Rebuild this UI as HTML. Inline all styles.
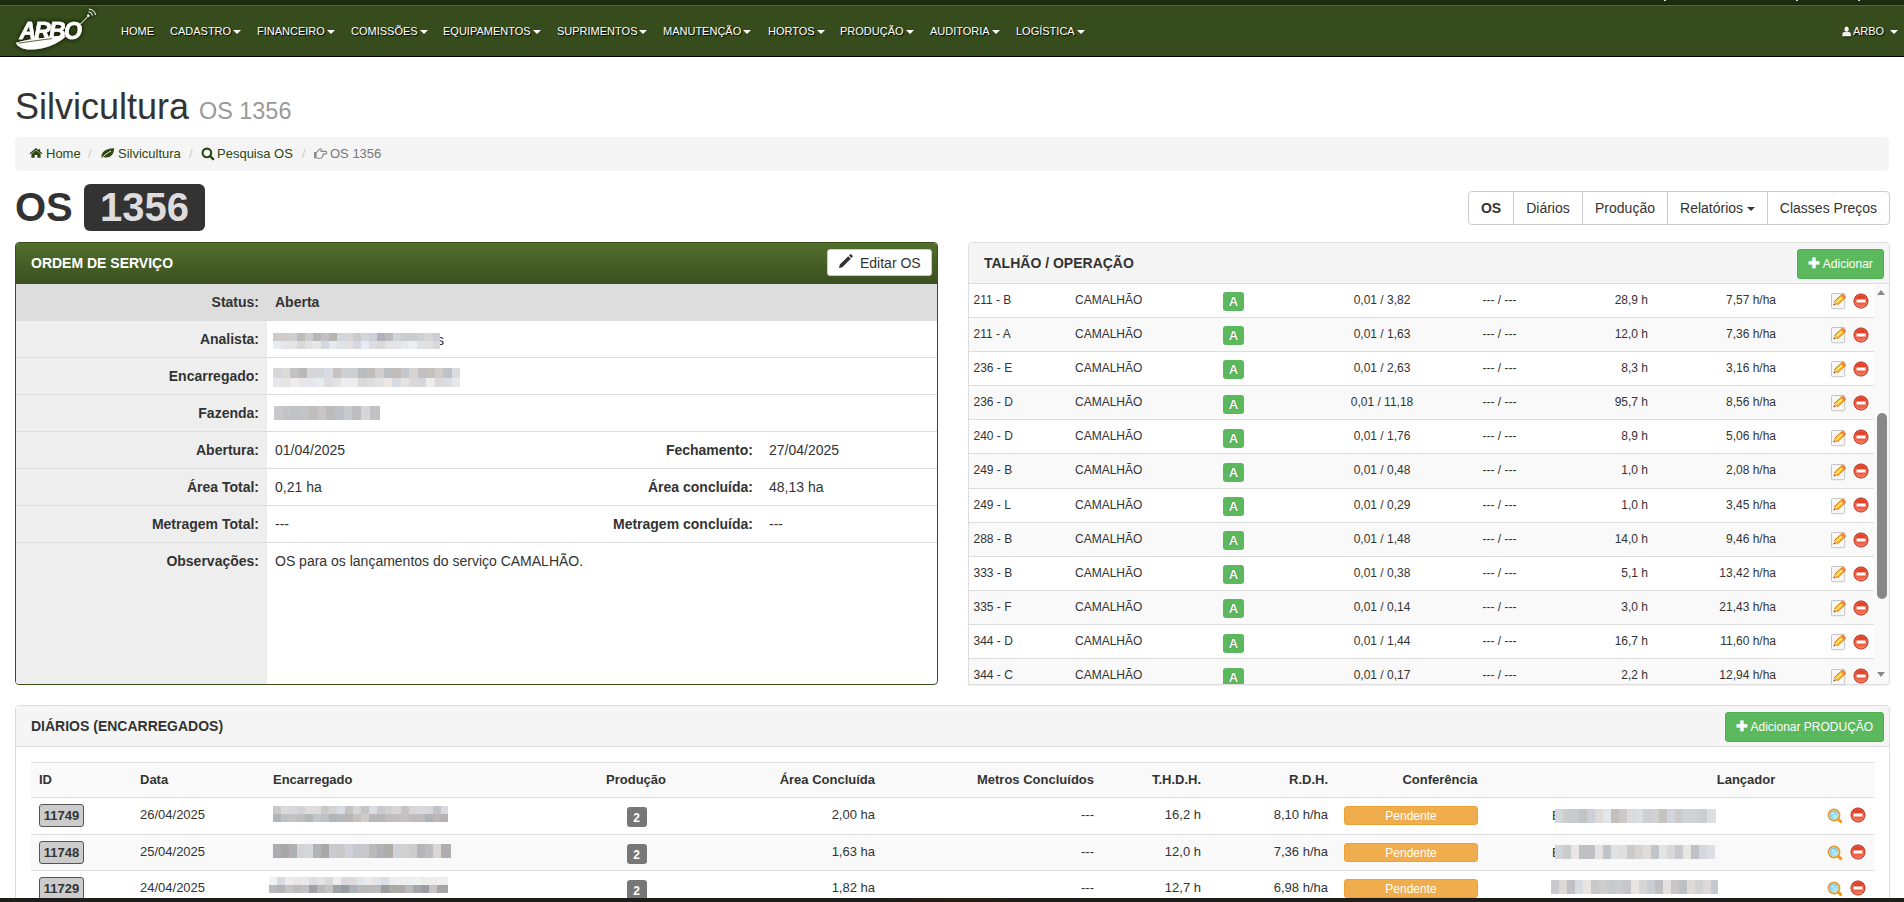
<!DOCTYPE html><html><head><meta charset="utf-8"><style>
*{box-sizing:border-box;margin:0;padding:0}
html,body{width:1904px;height:902px;overflow:hidden;background:#fff}
body{font-family:"Liberation Sans",sans-serif;color:#333;font-size:14px;position:relative}
.a{position:absolute;white-space:nowrap}
.r{text-align:right}
.pix{position:absolute;overflow:hidden}
.pix i{position:absolute;display:block}
#nav{position:absolute;left:0;top:0;width:1904px;height:57px;background:#364c1c}
#nav .s1{position:absolute;left:0;top:0;width:1904px;height:4px;background:#1c2a0e}
#nav .s2{position:absolute;left:0;top:4px;width:1904px;height:1px;background:#18250a}
#nav .s3{position:absolute;left:0;top:5px;width:1904px;height:1px;background:#4e6c2a}
#nav .s4{position:absolute;left:0;top:56px;width:1904px;height:1px;background:#000}
.nl{position:absolute;top:25px;font-size:11px;line-height:12px;color:#fff;text-shadow:1px 1px 1px #000;white-space:nowrap}
.caret{display:inline-block;width:0;height:0;border-top:4px solid;border-left:4px solid transparent;border-right:4px solid transparent;vertical-align:middle;margin-left:2px;margin-top:-1px}
.bc{position:absolute;left:15px;top:137px;width:1874px;height:34px;background:#f5f5f5;border-radius:4px}
.bct{position:absolute;top:146px;font-size:13px;line-height:15px;color:#2e4712;white-space:nowrap}
.bcs{position:absolute;top:146px;font-size:13px;line-height:15px;color:#ccc}
.btng{position:absolute;left:1468px;top:191px;height:34px;border:1px solid #ccc;border-radius:4px;background:#fff}
.btng div{position:absolute;top:0;height:32px;line-height:32px;font-size:14px;color:#333;text-align:center;border-left:1px solid #ccc}
.panel{position:absolute;border:1px solid #ddd;border-radius:4px;background:#fff;overflow:hidden}
.ph{position:absolute;left:0;top:0;right:0;background:#f5f5f5;border-bottom:1px solid #ddd}
.pt{position:absolute;font-size:14px;font-weight:bold;color:#333;white-space:nowrap;line-height:16px}
.btn-s{position:absolute;background:#5cb85c;border:1px solid #4cae4c;border-radius:3px;color:#fff;font-size:12px;line-height:27px;text-align:center;white-space:nowrap}
.lbl{position:absolute;font-weight:bold;font-size:14px;line-height:16px;text-align:right;white-space:nowrap}
.val{position:absolute;font-size:14px;line-height:16px;white-space:nowrap}
.hl{position:absolute;height:1px;background:#ddd}
.t12{position:absolute;font-size:12px;line-height:14px;white-space:nowrap}
.badgeA{position:absolute;width:21px;height:19px;background:#5cb85c;border-radius:3px;color:#fff;font-size:13px;font-weight:bold;line-height:19px;text-align:center;text-shadow:0 0 1px rgba(0,0,0,.6)}
.th{position:absolute;font-size:13px;font-weight:bold;line-height:15px;white-space:nowrap}
.t13{position:absolute;font-size:13px;line-height:15px;white-space:nowrap}
.idb{position:absolute;width:45px;height:23px;background:#ccc;border:1px solid #555;border-radius:3px;font-weight:bold;font-size:13px;line-height:21px;text-align:center;color:#333}
.pb{position:absolute;width:20px;height:20px;background:#777;border-radius:3px;color:#fff;font-weight:bold;font-size:12px;line-height:22px;text-align:center;text-indent:-1px}
.pend{position:absolute;width:134px;height:19px;background:#f0ad4e;border:1px solid #eea236;border-radius:3px;color:#fff;font-size:12px;line-height:19px;text-align:center}
</style></head><body><div id="nav"><div class="s1"></div><div class="s2"></div><div class="s3"></div><div class="s4"></div><svg class="a" style="left:0;top:0" width="110" height="56" viewBox="0 0 110 56">
<defs><filter id="sh" x="-30%" y="-30%" width="160%" height="160%"><feGaussianBlur in="SourceAlpha" stdDeviation="2" result="b"/><feFlood flood-color="#121e06"/><feComposite operator="in" in2="b"/><feComponentTransfer><feFuncA type="linear" slope="1.5"/></feComponentTransfer><feMerge><feMergeNode/><feMergeNode in="SourceGraphic"/></feMerge></filter></defs>
<g filter="url(#sh)">
<text x="19.5" y="38.6" font-family="Liberation Sans" font-weight="bold" font-style="italic" font-size="23" fill="#fff" stroke="#fff" stroke-width="0.5" letter-spacing="-1.8">ARBO</text>
<path d="M16 42.7 C 30 38.5, 50 37, 66 36 C 58 44, 45 49.5, 31 49.6 C 22 49.6, 17.5 46.5, 16 42.7 Z" fill="#fff"/>
<path d="M18.5 43.2 C 30 41.5, 42 39.8, 52 38.6" stroke="#2a3d14" stroke-width="0.8" fill="none"/>
<path d="M80.5 24 L 87.5 16.8" stroke="#fff" stroke-width="0.9"/>
<circle cx="88.2" cy="15.8" r="1.2" fill="#fff"/>
<path d="M88.6 11.8 A 4 4 0 0 1 92.4 15.4" stroke="#fff" stroke-width="0.9" fill="none"/>
<path d="M88.9 9.2 A 6.6 6.6 0 0 1 95.6 15" stroke="#fff" stroke-width="0.9" fill="none"/>
</g></svg><div class="nl" style="left:121px">HOME</div><div class="nl" style="left:170px">CADASTRO<span class="caret"></span></div><div class="nl" style="left:257px">FINANCEIRO<span class="caret"></span></div><div class="nl" style="left:351px">COMISSÕES<span class="caret"></span></div><div class="nl" style="left:443px">EQUIPAMENTOS<span class="caret"></span></div><div class="nl" style="left:557px">SUPRIMENTOS<span class="caret"></span></div><div class="nl" style="left:663px">MANUTENÇÃO<span class="caret"></span></div><div class="nl" style="left:768px">HORTOS<span class="caret"></span></div><div class="nl" style="left:840px">PRODUÇÃO<span class="caret"></span></div><div class="nl" style="left:930px">AUDITORIA<span class="caret"></span></div><div class="nl" style="left:1016px">LOGÍSTICA<span class="caret"></span></div><svg class="a" style="left:1842px;top:26px" width="10" height="12" viewBox="0 0 10 12"><ellipse cx="4.6" cy="3.2" rx="2.1" ry="2.6" fill="#fff"/><path d="M0.4 10.3 L0.4 8 Q0.4 6 2.4 6 L6.8 6 Q8.8 6 8.8 8 L8.8 10.3 Z" fill="#eee"/><path d="M1.2 11.2 L9.6 11.2" stroke="#000" stroke-width="0.8" opacity="0.5"/></svg><div class="nl" style="left:1853px">ARBO<span class="caret" style="margin-left:6px"></span></div></div><div class="a" style="left:15px;top:86px;font-size:36px;line-height:42px;color:#333">Silvicultura <span style="font-size:23.4px;color:#999">OS 1356</span></div><div class="bc"></div><svg class="a" style="left:29px;top:147px" width="14" height="12" viewBox="0 0 14 12"><path d="M0.9 6.7 L7 1.9 L13.1 6.7" stroke="#2e4712" stroke-width="1.3" fill="none"/><path d="M2.4 6.9 L7 3.3 L11.6 6.9 L11.6 10.8 L8.3 10.8 L8.3 7.9 L5.7 7.9 L5.7 10.8 L2.4 10.8 Z" fill="#2e4712"/><rect x="9.7" y="2" width="1.4" height="3.4" fill="#2e4712"/></svg><div class="bct" style="left:46px">Home</div><div class="bcs" style="left:88px">/</div><svg class="a" style="left:100px;top:147px" width="15" height="12" viewBox="0 0 15 12"><path d="M1.6 11 C 0.6 6.5, 4 1.6, 14.2 1.2 C 14 7.5, 10.5 11, 5 10.4 C 3.6 10.3, 2.6 10.2, 1.6 11 Z" fill="#2e4712"/><path d="M1.4 11.4 C 4 8.4, 7.5 5.8, 11 4" stroke="#f5f5f5" stroke-width="1" fill="none"/></svg><div class="bct" style="left:118px">Silvicultura</div><div class="bcs" style="left:189px">/</div><svg class="a" style="left:200px;top:146px" width="15" height="15" viewBox="0 0 15 15"><circle cx="6.9" cy="6.9" r="4.3" stroke="#2e4712" stroke-width="2.1" fill="none"/><path d="M9.9 9.9 L13.2 13.1" stroke="#2e4712" stroke-width="2.4" stroke-linecap="round"/></svg><div class="bct" style="left:217px">Pesquisa OS</div><div class="bcs" style="left:302px">/</div><svg class="a" style="left:313px;top:147px" width="15" height="13" viewBox="0 0 15 13"><rect x="1" y="5" width="2.6" height="6.2" fill="#888"/><path d="M3.6 5.4 L6.6 2.2 Q7.6 1.2 8.4 2.2 L7.9 4.4 L12.6 4.4 Q13.9 4.6 13.8 5.8 Q13.6 6.9 12.5 6.9 L10.2 6.9 L10.2 7.9 Q10.2 8.9 9.3 9.1 L9.3 9.9 Q9.1 11.2 7.7 11.2 L3.6 11.2" stroke="#888" stroke-width="1.1" fill="none" stroke-linejoin="round"/></svg><div class="bct" style="left:330px;color:#777">OS 1356</div><div class="a" style="left:15px;top:184px;font-size:40px;line-height:46px;font-weight:bold;color:#333">OS</div><div class="a" style="left:84px;top:184px;width:121px;height:47px;background:#333;border-radius:6px;color:#ddd;font-size:40px;font-weight:bold;line-height:47px;text-align:center">1356</div><div class="btng" style="width:422px"><div style="left:0px;width:44px;font-weight:bold;border-left:0;">OS</div><div style="left:44px;width:69px;">Diários</div><div style="left:113px;width:85px;">Produção</div><div style="left:198px;width:100px;">Relatórios <span class="caret" style="margin-left:0"></span></div><div style="left:298px;width:122px;">Classes Preços</div></div><div class="panel" style="left:15px;top:242px;width:923px;height:443px;border-color:#3a4f1e"><div class="ph" style="height:41px;background:linear-gradient(#516e2c,#3a5020);border-bottom:0"></div><div class="pt" style="left:15px;top:12px;color:#fff">ORDEM DE SERVIÇO</div><div class="a" style="left:811px;top:6px;width:105px;height:27px;background:#fff;border-radius:3px;border:1px solid #ccc"></div><svg class="a" style="left:822px;top:11px" width="15" height="15" viewBox="0 0 15 15"><path d="M1 14 L1.8 10.6 L10.2 2.2 L12.8 4.8 L4.4 13.2 Z M11 1.4 L12.2 0.3 Q12.8 -0.1 13.3 0.4 L14.6 1.7 Q15 2.2 14.6 2.7 L13.5 3.9 Z" fill="#333"/></svg><div class="a" style="left:844px;top:12px;font-size:14px;line-height:16px;color:#333">Editar OS</div><div class="a" style="left:0;top:41px;width:921px;height:37px;background:#ddd"></div><div class="a" style="left:0;top:78px;width:251px;height:364px;background:#eee"></div><div class="hl" style="left:0;top:114px;width:921px"></div><div class="hl" style="left:0;top:151px;width:921px"></div><div class="hl" style="left:0;top:188px;width:921px"></div><div class="hl" style="left:0;top:225px;width:921px"></div><div class="hl" style="left:0;top:262px;width:921px"></div><div class="hl" style="left:0;top:299px;width:921px"></div><div class="lbl" style="left:0;width:243px;top:51px">Status:</div><div class="val" style="left:259px;top:51px;font-weight:bold">Aberta</div><div class="lbl" style="left:0;width:243px;top:88px">Analista:</div><div class="lbl" style="left:0;width:243px;top:125px">Encarregado:</div><div class="lbl" style="left:0;width:243px;top:162px">Fazenda:</div><div class="lbl" style="left:0;width:243px;top:199px">Abertura:</div><div class="val" style="left:259px;top:199px;">01/04/2025</div><div class="lbl" style="left:0;width:243px;top:236px">Área Total:</div><div class="val" style="left:259px;top:236px;">0,21 ha</div><div class="lbl" style="left:0;width:243px;top:273px">Metragem Total:</div><div class="val" style="left:259px;top:273px;">---</div><div class="lbl" style="left:0;width:243px;top:310px">Observações:</div><div class="val" style="left:259px;top:310px;">OS para os lançamentos do serviço CAMALHÃO.</div><div class="lbl" style="left:500px;width:237px;top:199px">Fechamento:</div><div class="val" style="left:753px;top:199px">27/04/2025</div><div class="lbl" style="left:500px;width:237px;top:236px">Área concluída:</div><div class="val" style="left:753px;top:236px">48,13 ha</div><div class="lbl" style="left:500px;width:237px;top:273px">Metragem concluída:</div><div class="val" style="left:753px;top:273px">---</div><div class="pix" style="left:257px;top:90px;width:167px;height:16px"><i style="left:0px;top:0px;width:8.6px;height:8px;background:rgb(207,203,201)"></i><i style="left:8px;top:0px;width:8.6px;height:8px;background:rgb(207,204,203)"></i><i style="left:16px;top:0px;width:8.6px;height:8px;background:rgb(206,207,210)"></i><i style="left:24px;top:0px;width:8.6px;height:8px;background:rgb(190,186,184)"></i><i style="left:32px;top:0px;width:8.6px;height:8px;background:rgb(203,205,209)"></i><i style="left:40px;top:0px;width:8.6px;height:8px;background:rgb(184,181,180)"></i><i style="left:48px;top:0px;width:8.6px;height:8px;background:rgb(192,194,198)"></i><i style="left:56px;top:0px;width:8.6px;height:8px;background:rgb(184,180,178)"></i><i style="left:64px;top:0px;width:8.6px;height:8px;background:rgb(211,215,221)"></i><i style="left:72px;top:0px;width:8.6px;height:8px;background:rgb(215,213,213)"></i><i style="left:80px;top:0px;width:8.6px;height:8px;background:rgb(201,203,207)"></i><i style="left:88px;top:0px;width:8.6px;height:8px;background:rgb(210,214,220)"></i><i style="left:96px;top:0px;width:8.6px;height:8px;background:rgb(205,208,213)"></i><i style="left:104px;top:0px;width:8.6px;height:8px;background:rgb(174,178,184)"></i><i style="left:112px;top:0px;width:8.6px;height:8px;background:rgb(186,187,190)"></i><i style="left:120px;top:0px;width:8.6px;height:8px;background:rgb(209,213,219)"></i><i style="left:128px;top:0px;width:8.6px;height:8px;background:rgb(205,204,205)"></i><i style="left:136px;top:0px;width:8.6px;height:8px;background:rgb(202,203,206)"></i><i style="left:144px;top:0px;width:8.6px;height:8px;background:rgb(207,208,211)"></i><i style="left:152px;top:0px;width:8.6px;height:8px;background:rgb(215,215,217)"></i><i style="left:160px;top:0px;width:7px;height:8px;background:rgb(202,206,212)"></i><i style="left:0px;top:8px;width:8.6px;height:8px;background:rgb(233,236,241)"></i><i style="left:8px;top:8px;width:8.6px;height:8px;background:rgb(229,229,231)"></i><i style="left:16px;top:8px;width:8.6px;height:8px;background:rgb(232,228,226)"></i><i style="left:24px;top:8px;width:8.6px;height:8px;background:rgb(217,217,219)"></i><i style="left:32px;top:8px;width:8.6px;height:8px;background:rgb(224,225,228)"></i><i style="left:40px;top:8px;width:8.6px;height:8px;background:rgb(231,231,233)"></i><i style="left:48px;top:8px;width:8.6px;height:8px;background:rgb(212,215,220)"></i><i style="left:56px;top:8px;width:8.6px;height:8px;background:rgb(230,233,238)"></i><i style="left:64px;top:8px;width:8.6px;height:8px;background:rgb(224,227,232)"></i><i style="left:72px;top:8px;width:8.6px;height:8px;background:rgb(226,224,224)"></i><i style="left:80px;top:8px;width:8.6px;height:8px;background:rgb(213,217,223)"></i><i style="left:88px;top:8px;width:8.6px;height:8px;background:rgb(232,236,242)"></i><i style="left:96px;top:8px;width:8.6px;height:8px;background:rgb(220,221,224)"></i><i style="left:104px;top:8px;width:8.6px;height:8px;background:rgb(219,216,215)"></i><i style="left:112px;top:8px;width:8.6px;height:8px;background:rgb(229,227,227)"></i><i style="left:120px;top:8px;width:8.6px;height:8px;background:rgb(225,228,233)"></i><i style="left:128px;top:8px;width:8.6px;height:8px;background:rgb(232,233,236)"></i><i style="left:136px;top:8px;width:8.6px;height:8px;background:rgb(239,239,241)"></i><i style="left:144px;top:8px;width:8.6px;height:8px;background:rgb(222,225,230)"></i><i style="left:152px;top:8px;width:8.6px;height:8px;background:rgb(225,224,225)"></i><i style="left:160px;top:8px;width:7px;height:8px;background:rgb(217,215,215)"></i></div><div class="pix" style="left:257px;top:125px;width:187px;height:19px"><i style="left:0.0px;top:0px;width:9.1px;height:10px;background:rgb(215,215,217)"></i><i style="left:8.5px;top:0px;width:9.1px;height:10px;background:rgb(219,218,219)"></i><i style="left:17.0px;top:0px;width:9.1px;height:10px;background:rgb(196,194,194)"></i><i style="left:25.5px;top:0px;width:9.1px;height:10px;background:rgb(186,185,186)"></i><i style="left:34.0px;top:0px;width:9.1px;height:10px;background:rgb(215,215,217)"></i><i style="left:42.5px;top:0px;width:9.1px;height:10px;background:rgb(213,214,217)"></i><i style="left:51.0px;top:0px;width:9.1px;height:10px;background:rgb(216,220,226)"></i><i style="left:59.5px;top:0px;width:9.1px;height:10px;background:rgb(197,194,193)"></i><i style="left:68.0px;top:0px;width:9.1px;height:10px;background:rgb(206,208,212)"></i><i style="left:76.5px;top:0px;width:9.1px;height:10px;background:rgb(205,206,209)"></i><i style="left:85.0px;top:0px;width:9.1px;height:10px;background:rgb(187,188,191)"></i><i style="left:93.5px;top:0px;width:9.1px;height:10px;background:rgb(193,189,187)"></i><i style="left:102.0px;top:0px;width:9.1px;height:10px;background:rgb(208,206,206)"></i><i style="left:110.5px;top:0px;width:9.1px;height:10px;background:rgb(186,190,196)"></i><i style="left:119.0px;top:0px;width:9.1px;height:10px;background:rgb(192,188,186)"></i><i style="left:127.5px;top:0px;width:9.1px;height:10px;background:rgb(196,199,204)"></i><i style="left:136.0px;top:0px;width:9.1px;height:10px;background:rgb(215,212,211)"></i><i style="left:144.5px;top:0px;width:9.1px;height:10px;background:rgb(194,192,192)"></i><i style="left:153.0px;top:0px;width:9.1px;height:10px;background:rgb(197,193,191)"></i><i style="left:161.5px;top:0px;width:9.1px;height:10px;background:rgb(209,205,203)"></i><i style="left:170.0px;top:0px;width:9.1px;height:10px;background:rgb(191,195,201)"></i><i style="left:178.5px;top:0px;width:8.5px;height:10px;background:rgb(218,220,224)"></i><i style="left:0.0px;top:10px;width:9.1px;height:9px;background:rgb(228,231,236)"></i><i style="left:8.5px;top:10px;width:9.1px;height:9px;background:rgb(229,227,227)"></i><i style="left:17.0px;top:10px;width:9.1px;height:9px;background:rgb(239,236,235)"></i><i style="left:25.5px;top:10px;width:9.1px;height:9px;background:rgb(232,230,230)"></i><i style="left:34.0px;top:10px;width:9.1px;height:9px;background:rgb(228,232,238)"></i><i style="left:42.5px;top:10px;width:9.1px;height:9px;background:rgb(232,235,240)"></i><i style="left:51.0px;top:10px;width:9.1px;height:9px;background:rgb(221,221,223)"></i><i style="left:59.5px;top:10px;width:9.1px;height:9px;background:rgb(227,226,227)"></i><i style="left:68.0px;top:10px;width:9.1px;height:9px;background:rgb(239,237,237)"></i><i style="left:76.5px;top:10px;width:9.1px;height:9px;background:rgb(236,236,238)"></i><i style="left:85.0px;top:10px;width:9.1px;height:9px;background:rgb(218,218,220)"></i><i style="left:93.5px;top:10px;width:9.1px;height:9px;background:rgb(223,222,223)"></i><i style="left:102.0px;top:10px;width:9.1px;height:9px;background:rgb(227,226,227)"></i><i style="left:110.5px;top:10px;width:9.1px;height:9px;background:rgb(235,231,229)"></i><i style="left:119.0px;top:10px;width:9.1px;height:9px;background:rgb(216,220,226)"></i><i style="left:127.5px;top:10px;width:9.1px;height:9px;background:rgb(229,227,227)"></i><i style="left:136.0px;top:10px;width:9.1px;height:9px;background:rgb(220,216,214)"></i><i style="left:144.5px;top:10px;width:9.1px;height:9px;background:rgb(214,215,218)"></i><i style="left:153.0px;top:10px;width:9.1px;height:9px;background:rgb(238,236,236)"></i><i style="left:161.5px;top:10px;width:9.1px;height:9px;background:rgb(218,216,216)"></i><i style="left:170.0px;top:10px;width:9.1px;height:9px;background:rgb(218,221,226)"></i><i style="left:178.5px;top:10px;width:8.5px;height:9px;background:rgb(231,232,235)"></i></div><div class="pix" style="left:258px;top:163px;width:106px;height:14px"><i style="left:0.0px;top:0px;width:9.299999999999999px;height:14px;background:rgb(201,201,203)"></i><i style="left:8.7px;top:0px;width:9.299999999999999px;height:14px;background:rgb(195,196,199)"></i><i style="left:17.4px;top:0px;width:9.299999999999999px;height:14px;background:rgb(193,194,197)"></i><i style="left:26.1px;top:0px;width:9.299999999999999px;height:14px;background:rgb(194,196,200)"></i><i style="left:34.8px;top:0px;width:9.299999999999999px;height:14px;background:rgb(193,189,187)"></i><i style="left:43.5px;top:0px;width:9.299999999999999px;height:14px;background:rgb(198,198,200)"></i><i style="left:52.2px;top:0px;width:9.299999999999999px;height:14px;background:rgb(188,186,186)"></i><i style="left:60.9px;top:0px;width:9.299999999999999px;height:14px;background:rgb(189,193,199)"></i><i style="left:69.6px;top:0px;width:9.299999999999999px;height:14px;background:rgb(200,202,206)"></i><i style="left:78.3px;top:0px;width:9.299999999999999px;height:14px;background:rgb(190,190,192)"></i><i style="left:87.0px;top:0px;width:9.299999999999999px;height:14px;background:rgb(215,213,213)"></i><i style="left:95.7px;top:0px;width:10.300000000000011px;height:14px;background:rgb(193,193,195)"></i></div></div><div class="panel" style="left:968px;top:242px;width:922px;height:443px;border-bottom-left-radius:0;box-shadow:0 1px 1px rgba(0,0,0,.05)"><div class="ph" style="height:41px"></div><div class="pt" style="left:15px;top:12px">TALHÃO / OPERAÇÃO</div><div class="btn-s" style="left:828px;top:6px;width:87px;height:30px"><b style="font-size:14px">✚</b> Adicionar</div><div class="a" style="left:0;top:40px;width:905px;height:35px;background:#fff;border-top:1px solid #ddd"></div><div class="t12" style="left:4.5px;top:49.66px">211 - B</div><div class="t12" style="left:106px;top:49.66px">CAMALHÃO</div><div class="badgeA" style="left:254px;top:49px">A</div><div class="t12" style="left:353px;width:120px;text-align:center;top:49.66px">0,01 / 3,82</div><div class="t12" style="left:470.5px;width:120px;text-align:center;top:49.66px">--- / ---</div><div class="t12 r" style="left:579px;width:100px;top:49.66px">28,9 h</div><div class="t12 r" style="left:707px;width:100px;top:49.66px">7,57 h/ha</div><div class="a" style="left:0;top:74px;width:905px;height:35px;background:#f9f9f9;border-top:1px solid #ddd"></div><div class="t12" style="left:4.5px;top:83.8px">211 - A</div><div class="t12" style="left:106px;top:83.8px">CAMALHÃO</div><div class="badgeA" style="left:254px;top:83px">A</div><div class="t12" style="left:353px;width:120px;text-align:center;top:83.8px">0,01 / 1,63</div><div class="t12" style="left:470.5px;width:120px;text-align:center;top:83.8px">--- / ---</div><div class="t12 r" style="left:579px;width:100px;top:83.8px">12,0 h</div><div class="t12 r" style="left:707px;width:100px;top:83.8px">7,36 h/ha</div><div class="a" style="left:0;top:108px;width:905px;height:35px;background:#fff;border-top:1px solid #ddd"></div><div class="t12" style="left:4.5px;top:117.94px">236 - E</div><div class="t12" style="left:106px;top:117.94px">CAMALHÃO</div><div class="badgeA" style="left:254px;top:117px">A</div><div class="t12" style="left:353px;width:120px;text-align:center;top:117.94px">0,01 / 2,63</div><div class="t12" style="left:470.5px;width:120px;text-align:center;top:117.94px">--- / ---</div><div class="t12 r" style="left:579px;width:100px;top:117.94px">8,3 h</div><div class="t12 r" style="left:707px;width:100px;top:117.94px">3,16 h/ha</div><div class="a" style="left:0;top:142px;width:905px;height:35px;background:#f9f9f9;border-top:1px solid #ddd"></div><div class="t12" style="left:4.5px;top:152.08px">236 - D</div><div class="t12" style="left:106px;top:152.08px">CAMALHÃO</div><div class="badgeA" style="left:254px;top:152px">A</div><div class="t12" style="left:353px;width:120px;text-align:center;top:152.08px">0,01 / 11,18</div><div class="t12" style="left:470.5px;width:120px;text-align:center;top:152.08px">--- / ---</div><div class="t12 r" style="left:579px;width:100px;top:152.08px">95,7 h</div><div class="t12 r" style="left:707px;width:100px;top:152.08px">8,56 h/ha</div><div class="a" style="left:0;top:176px;width:905px;height:35px;background:#fff;border-top:1px solid #ddd"></div><div class="t12" style="left:4.5px;top:186.22px">240 - D</div><div class="t12" style="left:106px;top:186.22px">CAMALHÃO</div><div class="badgeA" style="left:254px;top:186px">A</div><div class="t12" style="left:353px;width:120px;text-align:center;top:186.22px">0,01 / 1,76</div><div class="t12" style="left:470.5px;width:120px;text-align:center;top:186.22px">--- / ---</div><div class="t12 r" style="left:579px;width:100px;top:186.22px">8,9 h</div><div class="t12 r" style="left:707px;width:100px;top:186.22px">5,06 h/ha</div><div class="a" style="left:0;top:210px;width:905px;height:36px;background:#f9f9f9;border-top:1px solid #ddd"></div><div class="t12" style="left:4.5px;top:220.36px">249 - B</div><div class="t12" style="left:106px;top:220.36px">CAMALHÃO</div><div class="badgeA" style="left:254px;top:220px">A</div><div class="t12" style="left:353px;width:120px;text-align:center;top:220.36px">0,01 / 0,48</div><div class="t12" style="left:470.5px;width:120px;text-align:center;top:220.36px">--- / ---</div><div class="t12 r" style="left:579px;width:100px;top:220.36px">1,0 h</div><div class="t12 r" style="left:707px;width:100px;top:220.36px">2,08 h/ha</div><div class="a" style="left:0;top:245px;width:905px;height:35px;background:#fff;border-top:1px solid #ddd"></div><div class="t12" style="left:4.5px;top:254.5px">249 - L</div><div class="t12" style="left:106px;top:254.5px">CAMALHÃO</div><div class="badgeA" style="left:254px;top:254px">A</div><div class="t12" style="left:353px;width:120px;text-align:center;top:254.5px">0,01 / 0,29</div><div class="t12" style="left:470.5px;width:120px;text-align:center;top:254.5px">--- / ---</div><div class="t12 r" style="left:579px;width:100px;top:254.5px">1,0 h</div><div class="t12 r" style="left:707px;width:100px;top:254.5px">3,45 h/ha</div><div class="a" style="left:0;top:279px;width:905px;height:35px;background:#f9f9f9;border-top:1px solid #ddd"></div><div class="t12" style="left:4.5px;top:288.64px">288 - B</div><div class="t12" style="left:106px;top:288.64px">CAMALHÃO</div><div class="badgeA" style="left:254px;top:288px">A</div><div class="t12" style="left:353px;width:120px;text-align:center;top:288.64px">0,01 / 1,48</div><div class="t12" style="left:470.5px;width:120px;text-align:center;top:288.64px">--- / ---</div><div class="t12 r" style="left:579px;width:100px;top:288.64px">14,0 h</div><div class="t12 r" style="left:707px;width:100px;top:288.64px">9,46 h/ha</div><div class="a" style="left:0;top:313px;width:905px;height:35px;background:#fff;border-top:1px solid #ddd"></div><div class="t12" style="left:4.5px;top:322.78px">333 - B</div><div class="t12" style="left:106px;top:322.78px">CAMALHÃO</div><div class="badgeA" style="left:254px;top:322px">A</div><div class="t12" style="left:353px;width:120px;text-align:center;top:322.78px">0,01 / 0,38</div><div class="t12" style="left:470.5px;width:120px;text-align:center;top:322.78px">--- / ---</div><div class="t12 r" style="left:579px;width:100px;top:322.78px">5,1 h</div><div class="t12 r" style="left:707px;width:100px;top:322.78px">13,42 h/ha</div><div class="a" style="left:0;top:347px;width:905px;height:35px;background:#f9f9f9;border-top:1px solid #ddd"></div><div class="t12" style="left:4.5px;top:356.92px">335 - F</div><div class="t12" style="left:106px;top:356.92px">CAMALHÃO</div><div class="badgeA" style="left:254px;top:356px">A</div><div class="t12" style="left:353px;width:120px;text-align:center;top:356.92px">0,01 / 0,14</div><div class="t12" style="left:470.5px;width:120px;text-align:center;top:356.92px">--- / ---</div><div class="t12 r" style="left:579px;width:100px;top:356.92px">3,0 h</div><div class="t12 r" style="left:707px;width:100px;top:356.92px">21,43 h/ha</div><div class="a" style="left:0;top:381px;width:905px;height:35px;background:#fff;border-top:1px solid #ddd"></div><div class="t12" style="left:4.5px;top:391.06px">344 - D</div><div class="t12" style="left:106px;top:391.06px">CAMALHÃO</div><div class="badgeA" style="left:254px;top:391px">A</div><div class="t12" style="left:353px;width:120px;text-align:center;top:391.06px">0,01 / 1,44</div><div class="t12" style="left:470.5px;width:120px;text-align:center;top:391.06px">--- / ---</div><div class="t12 r" style="left:579px;width:100px;top:391.06px">16,7 h</div><div class="t12 r" style="left:707px;width:100px;top:391.06px">11,60 h/ha</div><div class="a" style="left:0;top:415px;width:905px;height:35px;background:#f9f9f9;border-top:1px solid #ddd"></div><div class="t12" style="left:4.5px;top:425.2px">344 - C</div><div class="t12" style="left:106px;top:425.2px">CAMALHÃO</div><div class="badgeA" style="left:254px;top:425px">A</div><div class="t12" style="left:353px;width:120px;text-align:center;top:425.2px">0,01 / 0,17</div><div class="t12" style="left:470.5px;width:120px;text-align:center;top:425.2px">--- / ---</div><div class="t12 r" style="left:579px;width:100px;top:425.2px">2,2 h</div><div class="t12 r" style="left:707px;width:100px;top:425.2px">12,94 h/ha</div><div class="a" style="left:905px;top:41px;width:15px;height:401px;background:#f9f9f9"></div><div class="a" style="left:908px;top:47px;width:0;height:0;border-left:4.7px solid transparent;border-right:4.7px solid transparent;border-bottom:5px solid #888"></div><div class="a" style="left:908px;top:429px;width:0;height:0;border-left:4.7px solid transparent;border-right:4.7px solid transparent;border-top:5px solid #888"></div><div class="a" style="left:908px;top:170px;width:10px;height:186px;background:#888;border-radius:5px"></div></div><div class="panel" style="left:15px;top:705px;width:1875px;height:260px"><div class="ph" style="height:41px"></div><div class="pt" style="left:15px;top:12px">DIÁRIOS (ENCARREGADOS)</div><div class="btn-s" style="left:1709px;top:6px;width:159px;height:30px"><b style="font-size:14px">✚</b> Adicionar PRODUÇÃO</div><div class="a" style="left:15px;top:56px;width:1843px;height:36px;background:#f9f9f9;border-top:1px solid #ddd;border-bottom:1px solid #ddd"></div><div class="th" style="left:23px;top:66px">ID</div><div class="th" style="left:124px;top:66px">Data</div><div class="th" style="left:257px;top:66px">Encarregado</div><div class="th" style="left:560px;width:120px;text-align:center;top:66px">Produção</div><div class="th r" style="left:659px;width:200px;top:66px">Área Concluída</div><div class="th r" style="left:878px;width:200px;top:66px">Metros Concluídos</div><div class="th r" style="left:985px;width:200px;top:66px">T.H.D.H.</div><div class="th r" style="left:1112px;width:200px;top:66px">R.D.H.</div><div class="th" style="left:1349px;width:150px;text-align:center;top:66px">Conferência</div><div class="th" style="left:1655px;width:150px;text-align:center;top:66px">Lançador</div><div class="a" style="left:15px;top:91px;width:1843px;height:38px;background:#fff;border-top:1px solid #ddd"></div><div class="idb" style="left:23px;top:98px">11749</div><div class="t13" style="left:124px;top:101px">26/04/2025</div><div class="pix" style="left:257px;top:100px;width:175px;height:16px"><i style="left:0px;top:0px;width:8.6px;height:8px;background:rgb(202,200,200)"></i><i style="left:8px;top:0px;width:8.6px;height:8px;background:rgb(219,217,217)"></i><i style="left:16px;top:0px;width:8.6px;height:8px;background:rgb(215,215,217)"></i><i style="left:24px;top:0px;width:8.6px;height:8px;background:rgb(209,210,213)"></i><i style="left:32px;top:0px;width:8.6px;height:8px;background:rgb(223,220,219)"></i><i style="left:40px;top:0px;width:8.6px;height:8px;background:rgb(224,220,218)"></i><i style="left:48px;top:0px;width:8.6px;height:8px;background:rgb(204,200,198)"></i><i style="left:56px;top:0px;width:8.6px;height:8px;background:rgb(210,211,214)"></i><i style="left:64px;top:0px;width:8.6px;height:8px;background:rgb(216,220,226)"></i><i style="left:72px;top:0px;width:8.6px;height:8px;background:rgb(196,195,196)"></i><i style="left:80px;top:0px;width:8.6px;height:8px;background:rgb(215,213,213)"></i><i style="left:88px;top:0px;width:8.6px;height:8px;background:rgb(195,197,201)"></i><i style="left:96px;top:0px;width:8.6px;height:8px;background:rgb(219,220,223)"></i><i style="left:104px;top:0px;width:8.6px;height:8px;background:rgb(198,202,208)"></i><i style="left:112px;top:0px;width:8.6px;height:8px;background:rgb(210,208,208)"></i><i style="left:120px;top:0px;width:8.6px;height:8px;background:rgb(217,214,213)"></i><i style="left:128px;top:0px;width:8.6px;height:8px;background:rgb(197,196,197)"></i><i style="left:136px;top:0px;width:8.6px;height:8px;background:rgb(215,212,211)"></i><i style="left:144px;top:0px;width:8.6px;height:8px;background:rgb(214,217,222)"></i><i style="left:152px;top:0px;width:8.6px;height:8px;background:rgb(216,215,216)"></i><i style="left:160px;top:0px;width:8.6px;height:8px;background:rgb(193,195,199)"></i><i style="left:168px;top:0px;width:7px;height:8px;background:rgb(215,218,223)"></i><i style="left:0px;top:8px;width:8.6px;height:8px;background:rgb(177,181,187)"></i><i style="left:8px;top:8px;width:8.6px;height:8px;background:rgb(190,192,196)"></i><i style="left:16px;top:8px;width:8.6px;height:8px;background:rgb(196,195,196)"></i><i style="left:24px;top:8px;width:8.6px;height:8px;background:rgb(193,190,189)"></i><i style="left:32px;top:8px;width:8.6px;height:8px;background:rgb(180,182,186)"></i><i style="left:40px;top:8px;width:8.6px;height:8px;background:rgb(195,199,205)"></i><i style="left:48px;top:8px;width:8.6px;height:8px;background:rgb(192,193,196)"></i><i style="left:56px;top:8px;width:8.6px;height:8px;background:rgb(179,180,183)"></i><i style="left:64px;top:8px;width:8.6px;height:8px;background:rgb(181,184,189)"></i><i style="left:72px;top:8px;width:8.6px;height:8px;background:rgb(185,181,179)"></i><i style="left:80px;top:8px;width:8.6px;height:8px;background:rgb(197,193,191)"></i><i style="left:88px;top:8px;width:8.6px;height:8px;background:rgb(206,204,204)"></i><i style="left:96px;top:8px;width:8.6px;height:8px;background:rgb(185,184,185)"></i><i style="left:104px;top:8px;width:8.6px;height:8px;background:rgb(186,182,180)"></i><i style="left:112px;top:8px;width:8.6px;height:8px;background:rgb(191,191,193)"></i><i style="left:120px;top:8px;width:8.6px;height:8px;background:rgb(192,189,188)"></i><i style="left:128px;top:8px;width:8.6px;height:8px;background:rgb(196,194,194)"></i><i style="left:136px;top:8px;width:8.6px;height:8px;background:rgb(191,188,187)"></i><i style="left:144px;top:8px;width:8.6px;height:8px;background:rgb(190,190,192)"></i><i style="left:152px;top:8px;width:8.6px;height:8px;background:rgb(175,178,183)"></i><i style="left:160px;top:8px;width:8.6px;height:8px;background:rgb(186,183,182)"></i><i style="left:168px;top:8px;width:7px;height:8px;background:rgb(181,178,177)"></i></div><div class="pb" style="left:611px;top:101px">2</div><div class="t13 r" style="left:659px;width:200px;top:101px">2,00 ha</div><div class="t13 r" style="left:878px;width:200px;top:101px">---</div><div class="t13 r" style="left:985px;width:200px;top:101px">16,2 h</div><div class="t13 r" style="left:1112px;width:200px;top:101px">8,10 h/ha</div><div class="pend" style="left:1328px;top:100px">Pendente</div><div class="pix" style="left:1539px;top:103px;width:161px;height:14px"><i style="left:0px;top:0px;width:8.6px;height:14px;background:rgb(212,214,218)"></i><i style="left:8px;top:0px;width:8.6px;height:14px;background:rgb(201,203,207)"></i><i style="left:16px;top:0px;width:8.6px;height:14px;background:rgb(200,202,206)"></i><i style="left:24px;top:0px;width:8.6px;height:14px;background:rgb(193,195,199)"></i><i style="left:32px;top:0px;width:8.6px;height:14px;background:rgb(204,208,214)"></i><i style="left:40px;top:0px;width:8.6px;height:14px;background:rgb(221,218,217)"></i><i style="left:48px;top:0px;width:8.6px;height:14px;background:rgb(227,230,235)"></i><i style="left:56px;top:0px;width:8.6px;height:14px;background:rgb(195,191,189)"></i><i style="left:64px;top:0px;width:8.6px;height:14px;background:rgb(203,200,199)"></i><i style="left:72px;top:0px;width:8.6px;height:14px;background:rgb(218,218,220)"></i><i style="left:80px;top:0px;width:8.6px;height:14px;background:rgb(218,221,226)"></i><i style="left:88px;top:0px;width:8.6px;height:14px;background:rgb(204,206,210)"></i><i style="left:96px;top:0px;width:8.6px;height:14px;background:rgb(210,210,212)"></i><i style="left:104px;top:0px;width:8.6px;height:14px;background:rgb(198,194,192)"></i><i style="left:112px;top:0px;width:8.6px;height:14px;background:rgb(209,213,219)"></i><i style="left:120px;top:0px;width:8.6px;height:14px;background:rgb(204,203,204)"></i><i style="left:128px;top:0px;width:8.6px;height:14px;background:rgb(208,211,216)"></i><i style="left:136px;top:0px;width:8.6px;height:14px;background:rgb(206,209,214)"></i><i style="left:144px;top:0px;width:8.6px;height:14px;background:rgb(203,205,209)"></i><i style="left:152px;top:0px;width:9px;height:14px;background:rgb(221,221,223)"></i></div><div class="a" style="left:15px;top:128px;width:1843px;height:37px;background:#f9f9f9;border-top:1px solid #ddd"></div><div class="idb" style="left:23px;top:135px">11748</div><div class="t13" style="left:124px;top:138px">25/04/2025</div><div class="pix" style="left:257px;top:138px;width:178px;height:14px"><i style="left:0px;top:0px;width:8.6px;height:14px;background:rgb(172,173,176)"></i><i style="left:8px;top:0px;width:8.6px;height:14px;background:rgb(169,166,165)"></i><i style="left:16px;top:0px;width:8.6px;height:14px;background:rgb(173,176,181)"></i><i style="left:24px;top:0px;width:8.6px;height:14px;background:rgb(213,212,213)"></i><i style="left:32px;top:0px;width:8.6px;height:14px;background:rgb(212,215,220)"></i><i style="left:40px;top:0px;width:8.6px;height:14px;background:rgb(179,179,181)"></i><i style="left:48px;top:0px;width:8.6px;height:14px;background:rgb(169,168,169)"></i><i style="left:56px;top:0px;width:8.6px;height:14px;background:rgb(201,203,207)"></i><i style="left:64px;top:0px;width:8.6px;height:14px;background:rgb(202,200,200)"></i><i style="left:72px;top:0px;width:8.6px;height:14px;background:rgb(206,210,216)"></i><i style="left:80px;top:0px;width:8.6px;height:14px;background:rgb(197,201,207)"></i><i style="left:88px;top:0px;width:8.6px;height:14px;background:rgb(202,202,204)"></i><i style="left:96px;top:0px;width:8.6px;height:14px;background:rgb(186,184,184)"></i><i style="left:104px;top:0px;width:8.6px;height:14px;background:rgb(175,177,181)"></i><i style="left:112px;top:0px;width:8.6px;height:14px;background:rgb(176,172,170)"></i><i style="left:120px;top:0px;width:8.6px;height:14px;background:rgb(207,211,217)"></i><i style="left:128px;top:0px;width:8.6px;height:14px;background:rgb(210,209,210)"></i><i style="left:136px;top:0px;width:8.6px;height:14px;background:rgb(205,204,205)"></i><i style="left:144px;top:0px;width:8.6px;height:14px;background:rgb(179,181,185)"></i><i style="left:152px;top:0px;width:8.6px;height:14px;background:rgb(190,190,192)"></i><i style="left:160px;top:0px;width:8.6px;height:14px;background:rgb(218,214,212)"></i><i style="left:168px;top:0px;width:10px;height:14px;background:rgb(174,174,176)"></i></div><div class="pb" style="left:611px;top:138px">2</div><div class="t13 r" style="left:659px;width:200px;top:138px">1,63 ha</div><div class="t13 r" style="left:878px;width:200px;top:138px">---</div><div class="t13 r" style="left:985px;width:200px;top:138px">12,0 h</div><div class="t13 r" style="left:1112px;width:200px;top:138px">7,36 h/ha</div><div class="pend" style="left:1328px;top:137px">Pendente</div><div class="pix" style="left:1539px;top:139px;width:160px;height:14px"><i style="left:0px;top:0px;width:8.6px;height:14px;background:rgb(210,214,220)"></i><i style="left:8px;top:0px;width:8.6px;height:14px;background:rgb(203,203,205)"></i><i style="left:16px;top:0px;width:8.6px;height:14px;background:rgb(233,230,229)"></i><i style="left:24px;top:0px;width:8.6px;height:14px;background:rgb(192,192,194)"></i><i style="left:32px;top:0px;width:8.6px;height:14px;background:rgb(192,192,194)"></i><i style="left:40px;top:0px;width:8.6px;height:14px;background:rgb(228,226,226)"></i><i style="left:48px;top:0px;width:8.6px;height:14px;background:rgb(193,196,201)"></i><i style="left:56px;top:0px;width:8.6px;height:14px;background:rgb(225,226,229)"></i><i style="left:64px;top:0px;width:8.6px;height:14px;background:rgb(223,222,223)"></i><i style="left:72px;top:0px;width:8.6px;height:14px;background:rgb(205,201,199)"></i><i style="left:80px;top:0px;width:8.6px;height:14px;background:rgb(216,212,210)"></i><i style="left:88px;top:0px;width:8.6px;height:14px;background:rgb(224,220,218)"></i><i style="left:96px;top:0px;width:8.6px;height:14px;background:rgb(193,196,201)"></i><i style="left:104px;top:0px;width:8.6px;height:14px;background:rgb(229,228,229)"></i><i style="left:112px;top:0px;width:8.6px;height:14px;background:rgb(217,216,217)"></i><i style="left:120px;top:0px;width:8.6px;height:14px;background:rgb(200,202,206)"></i><i style="left:128px;top:0px;width:8.6px;height:14px;background:rgb(232,229,228)"></i><i style="left:136px;top:0px;width:8.6px;height:14px;background:rgb(191,194,199)"></i><i style="left:144px;top:0px;width:8.6px;height:14px;background:rgb(212,215,220)"></i><i style="left:152px;top:0px;width:8px;height:14px;background:rgb(220,222,226)"></i></div><div class="a" style="left:15px;top:164px;width:1843px;height:61px;background:#fff;border-top:1px solid #ddd"></div><div class="idb" style="left:23px;top:171px">11729</div><div class="t13" style="left:124px;top:174px">24/04/2025</div><div class="pix" style="left:253px;top:171px;width:179px;height:16px"><i style="left:0px;top:0px;width:8.6px;height:8px;background:rgb(242,242,244)"></i><i style="left:8px;top:0px;width:8.6px;height:8px;background:rgb(216,220,226)"></i><i style="left:16px;top:0px;width:8.6px;height:8px;background:rgb(236,236,238)"></i><i style="left:24px;top:0px;width:8.6px;height:8px;background:rgb(233,231,231)"></i><i style="left:32px;top:0px;width:8.6px;height:8px;background:rgb(235,234,235)"></i><i style="left:40px;top:0px;width:8.6px;height:8px;background:rgb(221,222,225)"></i><i style="left:48px;top:0px;width:8.6px;height:8px;background:rgb(229,226,225)"></i><i style="left:56px;top:0px;width:8.6px;height:8px;background:rgb(217,218,221)"></i><i style="left:64px;top:0px;width:8.6px;height:8px;background:rgb(240,237,236)"></i><i style="left:72px;top:0px;width:8.6px;height:8px;background:rgb(215,218,223)"></i><i style="left:80px;top:0px;width:8.6px;height:8px;background:rgb(223,220,219)"></i><i style="left:88px;top:0px;width:8.6px;height:8px;background:rgb(227,231,237)"></i><i style="left:96px;top:0px;width:8.6px;height:8px;background:rgb(236,234,234)"></i><i style="left:104px;top:0px;width:8.6px;height:8px;background:rgb(225,229,235)"></i><i style="left:112px;top:0px;width:8.6px;height:8px;background:rgb(220,224,230)"></i><i style="left:120px;top:0px;width:8.6px;height:8px;background:rgb(237,236,237)"></i><i style="left:128px;top:0px;width:8.6px;height:8px;background:rgb(237,239,243)"></i><i style="left:136px;top:0px;width:8.6px;height:8px;background:rgb(236,237,240)"></i><i style="left:144px;top:0px;width:8.6px;height:8px;background:rgb(242,241,242)"></i><i style="left:152px;top:0px;width:8.6px;height:8px;background:rgb(237,236,237)"></i><i style="left:160px;top:0px;width:8.6px;height:8px;background:rgb(236,236,238)"></i><i style="left:168px;top:0px;width:11px;height:8px;background:rgb(240,239,240)"></i><i style="left:0px;top:8px;width:8.6px;height:8px;background:rgb(183,186,191)"></i><i style="left:8px;top:8px;width:8.6px;height:8px;background:rgb(178,180,184)"></i><i style="left:16px;top:8px;width:8.6px;height:8px;background:rgb(198,195,194)"></i><i style="left:24px;top:8px;width:8.6px;height:8px;background:rgb(190,187,186)"></i><i style="left:32px;top:8px;width:8.6px;height:8px;background:rgb(191,193,197)"></i><i style="left:40px;top:8px;width:8.6px;height:8px;background:rgb(159,161,165)"></i><i style="left:48px;top:8px;width:8.6px;height:8px;background:rgb(185,184,185)"></i><i style="left:56px;top:8px;width:8.6px;height:8px;background:rgb(197,193,191)"></i><i style="left:64px;top:8px;width:8.6px;height:8px;background:rgb(159,162,167)"></i><i style="left:72px;top:8px;width:8.6px;height:8px;background:rgb(152,155,160)"></i><i style="left:80px;top:8px;width:8.6px;height:8px;background:rgb(173,177,183)"></i><i style="left:88px;top:8px;width:8.6px;height:8px;background:rgb(186,186,188)"></i><i style="left:96px;top:8px;width:8.6px;height:8px;background:rgb(186,186,188)"></i><i style="left:104px;top:8px;width:8.6px;height:8px;background:rgb(188,187,188)"></i><i style="left:112px;top:8px;width:8.6px;height:8px;background:rgb(157,156,157)"></i><i style="left:120px;top:8px;width:8.6px;height:8px;background:rgb(172,168,166)"></i><i style="left:128px;top:8px;width:8.6px;height:8px;background:rgb(172,169,168)"></i><i style="left:136px;top:8px;width:8.6px;height:8px;background:rgb(184,185,188)"></i><i style="left:144px;top:8px;width:8.6px;height:8px;background:rgb(164,166,170)"></i><i style="left:152px;top:8px;width:8.6px;height:8px;background:rgb(153,156,161)"></i><i style="left:160px;top:8px;width:8.6px;height:8px;background:rgb(198,195,194)"></i><i style="left:168px;top:8px;width:11px;height:8px;background:rgb(166,165,166)"></i></div><div class="pb" style="left:611px;top:174px">2</div><div class="t13 r" style="left:659px;width:200px;top:174px">1,82 ha</div><div class="t13 r" style="left:878px;width:200px;top:174px">---</div><div class="t13 r" style="left:985px;width:200px;top:174px">12,7 h</div><div class="t13 r" style="left:1112px;width:200px;top:174px">6,98 h/ha</div><div class="pend" style="left:1328px;top:173px">Pendente</div><div class="pix" style="left:1535px;top:174px;width:167px;height:14px"><i style="left:0px;top:0px;width:8.6px;height:14px;background:rgb(201,202,205)"></i><i style="left:8px;top:0px;width:8.6px;height:14px;background:rgb(221,217,215)"></i><i style="left:16px;top:0px;width:8.6px;height:14px;background:rgb(191,193,197)"></i><i style="left:24px;top:0px;width:8.6px;height:14px;background:rgb(216,220,226)"></i><i style="left:32px;top:0px;width:8.6px;height:14px;background:rgb(233,229,227)"></i><i style="left:40px;top:0px;width:8.6px;height:14px;background:rgb(202,200,200)"></i><i style="left:48px;top:0px;width:8.6px;height:14px;background:rgb(207,205,205)"></i><i style="left:56px;top:0px;width:8.6px;height:14px;background:rgb(198,202,208)"></i><i style="left:64px;top:0px;width:8.6px;height:14px;background:rgb(202,204,208)"></i><i style="left:72px;top:0px;width:8.6px;height:14px;background:rgb(197,198,201)"></i><i style="left:80px;top:0px;width:8.6px;height:14px;background:rgb(231,228,227)"></i><i style="left:88px;top:0px;width:8.6px;height:14px;background:rgb(215,214,215)"></i><i style="left:96px;top:0px;width:8.6px;height:14px;background:rgb(201,205,211)"></i><i style="left:104px;top:0px;width:8.6px;height:14px;background:rgb(191,191,193)"></i><i style="left:112px;top:0px;width:8.6px;height:14px;background:rgb(228,224,222)"></i><i style="left:120px;top:0px;width:8.6px;height:14px;background:rgb(201,197,195)"></i><i style="left:128px;top:0px;width:8.6px;height:14px;background:rgb(188,192,198)"></i><i style="left:136px;top:0px;width:8.6px;height:14px;background:rgb(223,219,217)"></i><i style="left:144px;top:0px;width:8.6px;height:14px;background:rgb(211,210,211)"></i><i style="left:152px;top:0px;width:8.6px;height:14px;background:rgb(219,217,217)"></i><i style="left:160px;top:0px;width:7px;height:14px;background:rgb(198,202,208)"></i></div></div><svg class="a" style="left:1830.25px;top:290.06px" width="18" height="20" viewBox="0 0 18 20"><rect x="1.5" y="3.5" width="13.2" height="15.2" rx="1" fill="#f7f7f7" stroke="#c4c4c4" stroke-width="1"/><g transform="translate(3.6,15.2) rotate(-42)"><path d="M0 0 L3.4 -2.3 L3.4 2.3 Z" fill="#f6c890"/><path d="M0 0 L1.6 -1.1 L1.6 1.1 Z" fill="#6a3000"/><rect x="3.4" y="-2.3" width="9.2" height="4.6" fill="#f8c020" stroke="#e2760c" stroke-width="0.9"/><rect x="3.2" y="-0.9" width="9.2" height="1.2" fill="#fff2a0"/><rect x="12" y="-2.4" width="2.6" height="4.8" rx="1.2" fill="#f6884c" stroke="#e2760c" stroke-width="0.6"/></g></svg><svg class="a" style="left:1851.5px;top:291.56px" width="18" height="18" viewBox="0 0 18 18"><defs><linearGradient id="rg1860300" x1="0" y1="0" x2="0" y2="1"><stop offset="0" stop-color="#d93a22"/><stop offset="0.45" stop-color="#ea4a2c"/><stop offset="1" stop-color="#fa7a62"/></linearGradient></defs><circle cx="9" cy="9" r="7.05" fill="url(#rg1860300)" stroke="#b8301f" stroke-width="1"/><circle cx="9" cy="9" r="6.0" fill="none" stroke="#f9a090" stroke-width="0.5" opacity="0.6"/><rect x="4.5" y="7.5" width="9" height="3" fill="#fff"/></svg><svg class="a" style="left:1830.25px;top:324.2px" width="18" height="20" viewBox="0 0 18 20"><rect x="1.5" y="3.5" width="13.2" height="15.2" rx="1" fill="#f7f7f7" stroke="#c4c4c4" stroke-width="1"/><g transform="translate(3.6,15.2) rotate(-42)"><path d="M0 0 L3.4 -2.3 L3.4 2.3 Z" fill="#f6c890"/><path d="M0 0 L1.6 -1.1 L1.6 1.1 Z" fill="#6a3000"/><rect x="3.4" y="-2.3" width="9.2" height="4.6" fill="#f8c020" stroke="#e2760c" stroke-width="0.9"/><rect x="3.2" y="-0.9" width="9.2" height="1.2" fill="#fff2a0"/><rect x="12" y="-2.4" width="2.6" height="4.8" rx="1.2" fill="#f6884c" stroke="#e2760c" stroke-width="0.6"/></g></svg><svg class="a" style="left:1851.5px;top:325.7px" width="18" height="18" viewBox="0 0 18 18"><defs><linearGradient id="rg1860334" x1="0" y1="0" x2="0" y2="1"><stop offset="0" stop-color="#d93a22"/><stop offset="0.45" stop-color="#ea4a2c"/><stop offset="1" stop-color="#fa7a62"/></linearGradient></defs><circle cx="9" cy="9" r="7.05" fill="url(#rg1860334)" stroke="#b8301f" stroke-width="1"/><circle cx="9" cy="9" r="6.0" fill="none" stroke="#f9a090" stroke-width="0.5" opacity="0.6"/><rect x="4.5" y="7.5" width="9" height="3" fill="#fff"/></svg><svg class="a" style="left:1830.25px;top:358.34px" width="18" height="20" viewBox="0 0 18 20"><rect x="1.5" y="3.5" width="13.2" height="15.2" rx="1" fill="#f7f7f7" stroke="#c4c4c4" stroke-width="1"/><g transform="translate(3.6,15.2) rotate(-42)"><path d="M0 0 L3.4 -2.3 L3.4 2.3 Z" fill="#f6c890"/><path d="M0 0 L1.6 -1.1 L1.6 1.1 Z" fill="#6a3000"/><rect x="3.4" y="-2.3" width="9.2" height="4.6" fill="#f8c020" stroke="#e2760c" stroke-width="0.9"/><rect x="3.2" y="-0.9" width="9.2" height="1.2" fill="#fff2a0"/><rect x="12" y="-2.4" width="2.6" height="4.8" rx="1.2" fill="#f6884c" stroke="#e2760c" stroke-width="0.6"/></g></svg><svg class="a" style="left:1851.5px;top:359.84px" width="18" height="18" viewBox="0 0 18 18"><defs><linearGradient id="rg1860368" x1="0" y1="0" x2="0" y2="1"><stop offset="0" stop-color="#d93a22"/><stop offset="0.45" stop-color="#ea4a2c"/><stop offset="1" stop-color="#fa7a62"/></linearGradient></defs><circle cx="9" cy="9" r="7.05" fill="url(#rg1860368)" stroke="#b8301f" stroke-width="1"/><circle cx="9" cy="9" r="6.0" fill="none" stroke="#f9a090" stroke-width="0.5" opacity="0.6"/><rect x="4.5" y="7.5" width="9" height="3" fill="#fff"/></svg><svg class="a" style="left:1830.25px;top:392.47999999999996px" width="18" height="20" viewBox="0 0 18 20"><rect x="1.5" y="3.5" width="13.2" height="15.2" rx="1" fill="#f7f7f7" stroke="#c4c4c4" stroke-width="1"/><g transform="translate(3.6,15.2) rotate(-42)"><path d="M0 0 L3.4 -2.3 L3.4 2.3 Z" fill="#f6c890"/><path d="M0 0 L1.6 -1.1 L1.6 1.1 Z" fill="#6a3000"/><rect x="3.4" y="-2.3" width="9.2" height="4.6" fill="#f8c020" stroke="#e2760c" stroke-width="0.9"/><rect x="3.2" y="-0.9" width="9.2" height="1.2" fill="#fff2a0"/><rect x="12" y="-2.4" width="2.6" height="4.8" rx="1.2" fill="#f6884c" stroke="#e2760c" stroke-width="0.6"/></g></svg><svg class="a" style="left:1851.5px;top:393.97999999999996px" width="18" height="18" viewBox="0 0 18 18"><defs><linearGradient id="rg1860402" x1="0" y1="0" x2="0" y2="1"><stop offset="0" stop-color="#d93a22"/><stop offset="0.45" stop-color="#ea4a2c"/><stop offset="1" stop-color="#fa7a62"/></linearGradient></defs><circle cx="9" cy="9" r="7.05" fill="url(#rg1860402)" stroke="#b8301f" stroke-width="1"/><circle cx="9" cy="9" r="6.0" fill="none" stroke="#f9a090" stroke-width="0.5" opacity="0.6"/><rect x="4.5" y="7.5" width="9" height="3" fill="#fff"/></svg><svg class="a" style="left:1830.25px;top:426.62px" width="18" height="20" viewBox="0 0 18 20"><rect x="1.5" y="3.5" width="13.2" height="15.2" rx="1" fill="#f7f7f7" stroke="#c4c4c4" stroke-width="1"/><g transform="translate(3.6,15.2) rotate(-42)"><path d="M0 0 L3.4 -2.3 L3.4 2.3 Z" fill="#f6c890"/><path d="M0 0 L1.6 -1.1 L1.6 1.1 Z" fill="#6a3000"/><rect x="3.4" y="-2.3" width="9.2" height="4.6" fill="#f8c020" stroke="#e2760c" stroke-width="0.9"/><rect x="3.2" y="-0.9" width="9.2" height="1.2" fill="#fff2a0"/><rect x="12" y="-2.4" width="2.6" height="4.8" rx="1.2" fill="#f6884c" stroke="#e2760c" stroke-width="0.6"/></g></svg><svg class="a" style="left:1851.5px;top:428.12px" width="18" height="18" viewBox="0 0 18 18"><defs><linearGradient id="rg1860437" x1="0" y1="0" x2="0" y2="1"><stop offset="0" stop-color="#d93a22"/><stop offset="0.45" stop-color="#ea4a2c"/><stop offset="1" stop-color="#fa7a62"/></linearGradient></defs><circle cx="9" cy="9" r="7.05" fill="url(#rg1860437)" stroke="#b8301f" stroke-width="1"/><circle cx="9" cy="9" r="6.0" fill="none" stroke="#f9a090" stroke-width="0.5" opacity="0.6"/><rect x="4.5" y="7.5" width="9" height="3" fill="#fff"/></svg><svg class="a" style="left:1830.25px;top:460.76px" width="18" height="20" viewBox="0 0 18 20"><rect x="1.5" y="3.5" width="13.2" height="15.2" rx="1" fill="#f7f7f7" stroke="#c4c4c4" stroke-width="1"/><g transform="translate(3.6,15.2) rotate(-42)"><path d="M0 0 L3.4 -2.3 L3.4 2.3 Z" fill="#f6c890"/><path d="M0 0 L1.6 -1.1 L1.6 1.1 Z" fill="#6a3000"/><rect x="3.4" y="-2.3" width="9.2" height="4.6" fill="#f8c020" stroke="#e2760c" stroke-width="0.9"/><rect x="3.2" y="-0.9" width="9.2" height="1.2" fill="#fff2a0"/><rect x="12" y="-2.4" width="2.6" height="4.8" rx="1.2" fill="#f6884c" stroke="#e2760c" stroke-width="0.6"/></g></svg><svg class="a" style="left:1851.5px;top:462.26px" width="18" height="18" viewBox="0 0 18 18"><defs><linearGradient id="rg1860471" x1="0" y1="0" x2="0" y2="1"><stop offset="0" stop-color="#d93a22"/><stop offset="0.45" stop-color="#ea4a2c"/><stop offset="1" stop-color="#fa7a62"/></linearGradient></defs><circle cx="9" cy="9" r="7.05" fill="url(#rg1860471)" stroke="#b8301f" stroke-width="1"/><circle cx="9" cy="9" r="6.0" fill="none" stroke="#f9a090" stroke-width="0.5" opacity="0.6"/><rect x="4.5" y="7.5" width="9" height="3" fill="#fff"/></svg><svg class="a" style="left:1830.25px;top:494.9px" width="18" height="20" viewBox="0 0 18 20"><rect x="1.5" y="3.5" width="13.2" height="15.2" rx="1" fill="#f7f7f7" stroke="#c4c4c4" stroke-width="1"/><g transform="translate(3.6,15.2) rotate(-42)"><path d="M0 0 L3.4 -2.3 L3.4 2.3 Z" fill="#f6c890"/><path d="M0 0 L1.6 -1.1 L1.6 1.1 Z" fill="#6a3000"/><rect x="3.4" y="-2.3" width="9.2" height="4.6" fill="#f8c020" stroke="#e2760c" stroke-width="0.9"/><rect x="3.2" y="-0.9" width="9.2" height="1.2" fill="#fff2a0"/><rect x="12" y="-2.4" width="2.6" height="4.8" rx="1.2" fill="#f6884c" stroke="#e2760c" stroke-width="0.6"/></g></svg><svg class="a" style="left:1851.5px;top:496.4px" width="18" height="18" viewBox="0 0 18 18"><defs><linearGradient id="rg1860505" x1="0" y1="0" x2="0" y2="1"><stop offset="0" stop-color="#d93a22"/><stop offset="0.45" stop-color="#ea4a2c"/><stop offset="1" stop-color="#fa7a62"/></linearGradient></defs><circle cx="9" cy="9" r="7.05" fill="url(#rg1860505)" stroke="#b8301f" stroke-width="1"/><circle cx="9" cy="9" r="6.0" fill="none" stroke="#f9a090" stroke-width="0.5" opacity="0.6"/><rect x="4.5" y="7.5" width="9" height="3" fill="#fff"/></svg><svg class="a" style="left:1830.25px;top:529.04px" width="18" height="20" viewBox="0 0 18 20"><rect x="1.5" y="3.5" width="13.2" height="15.2" rx="1" fill="#f7f7f7" stroke="#c4c4c4" stroke-width="1"/><g transform="translate(3.6,15.2) rotate(-42)"><path d="M0 0 L3.4 -2.3 L3.4 2.3 Z" fill="#f6c890"/><path d="M0 0 L1.6 -1.1 L1.6 1.1 Z" fill="#6a3000"/><rect x="3.4" y="-2.3" width="9.2" height="4.6" fill="#f8c020" stroke="#e2760c" stroke-width="0.9"/><rect x="3.2" y="-0.9" width="9.2" height="1.2" fill="#fff2a0"/><rect x="12" y="-2.4" width="2.6" height="4.8" rx="1.2" fill="#f6884c" stroke="#e2760c" stroke-width="0.6"/></g></svg><svg class="a" style="left:1851.5px;top:530.54px" width="18" height="18" viewBox="0 0 18 18"><defs><linearGradient id="rg1860539" x1="0" y1="0" x2="0" y2="1"><stop offset="0" stop-color="#d93a22"/><stop offset="0.45" stop-color="#ea4a2c"/><stop offset="1" stop-color="#fa7a62"/></linearGradient></defs><circle cx="9" cy="9" r="7.05" fill="url(#rg1860539)" stroke="#b8301f" stroke-width="1"/><circle cx="9" cy="9" r="6.0" fill="none" stroke="#f9a090" stroke-width="0.5" opacity="0.6"/><rect x="4.5" y="7.5" width="9" height="3" fill="#fff"/></svg><svg class="a" style="left:1830.25px;top:563.18px" width="18" height="20" viewBox="0 0 18 20"><rect x="1.5" y="3.5" width="13.2" height="15.2" rx="1" fill="#f7f7f7" stroke="#c4c4c4" stroke-width="1"/><g transform="translate(3.6,15.2) rotate(-42)"><path d="M0 0 L3.4 -2.3 L3.4 2.3 Z" fill="#f6c890"/><path d="M0 0 L1.6 -1.1 L1.6 1.1 Z" fill="#6a3000"/><rect x="3.4" y="-2.3" width="9.2" height="4.6" fill="#f8c020" stroke="#e2760c" stroke-width="0.9"/><rect x="3.2" y="-0.9" width="9.2" height="1.2" fill="#fff2a0"/><rect x="12" y="-2.4" width="2.6" height="4.8" rx="1.2" fill="#f6884c" stroke="#e2760c" stroke-width="0.6"/></g></svg><svg class="a" style="left:1851.5px;top:564.68px" width="18" height="18" viewBox="0 0 18 18"><defs><linearGradient id="rg1860573" x1="0" y1="0" x2="0" y2="1"><stop offset="0" stop-color="#d93a22"/><stop offset="0.45" stop-color="#ea4a2c"/><stop offset="1" stop-color="#fa7a62"/></linearGradient></defs><circle cx="9" cy="9" r="7.05" fill="url(#rg1860573)" stroke="#b8301f" stroke-width="1"/><circle cx="9" cy="9" r="6.0" fill="none" stroke="#f9a090" stroke-width="0.5" opacity="0.6"/><rect x="4.5" y="7.5" width="9" height="3" fill="#fff"/></svg><svg class="a" style="left:1830.25px;top:597.3199999999999px" width="18" height="20" viewBox="0 0 18 20"><rect x="1.5" y="3.5" width="13.2" height="15.2" rx="1" fill="#f7f7f7" stroke="#c4c4c4" stroke-width="1"/><g transform="translate(3.6,15.2) rotate(-42)"><path d="M0 0 L3.4 -2.3 L3.4 2.3 Z" fill="#f6c890"/><path d="M0 0 L1.6 -1.1 L1.6 1.1 Z" fill="#6a3000"/><rect x="3.4" y="-2.3" width="9.2" height="4.6" fill="#f8c020" stroke="#e2760c" stroke-width="0.9"/><rect x="3.2" y="-0.9" width="9.2" height="1.2" fill="#fff2a0"/><rect x="12" y="-2.4" width="2.6" height="4.8" rx="1.2" fill="#f6884c" stroke="#e2760c" stroke-width="0.6"/></g></svg><svg class="a" style="left:1851.5px;top:598.8199999999999px" width="18" height="18" viewBox="0 0 18 18"><defs><linearGradient id="rg1860607" x1="0" y1="0" x2="0" y2="1"><stop offset="0" stop-color="#d93a22"/><stop offset="0.45" stop-color="#ea4a2c"/><stop offset="1" stop-color="#fa7a62"/></linearGradient></defs><circle cx="9" cy="9" r="7.05" fill="url(#rg1860607)" stroke="#b8301f" stroke-width="1"/><circle cx="9" cy="9" r="6.0" fill="none" stroke="#f9a090" stroke-width="0.5" opacity="0.6"/><rect x="4.5" y="7.5" width="9" height="3" fill="#fff"/></svg><svg class="a" style="left:1830.25px;top:631.4599999999999px" width="18" height="20" viewBox="0 0 18 20"><rect x="1.5" y="3.5" width="13.2" height="15.2" rx="1" fill="#f7f7f7" stroke="#c4c4c4" stroke-width="1"/><g transform="translate(3.6,15.2) rotate(-42)"><path d="M0 0 L3.4 -2.3 L3.4 2.3 Z" fill="#f6c890"/><path d="M0 0 L1.6 -1.1 L1.6 1.1 Z" fill="#6a3000"/><rect x="3.4" y="-2.3" width="9.2" height="4.6" fill="#f8c020" stroke="#e2760c" stroke-width="0.9"/><rect x="3.2" y="-0.9" width="9.2" height="1.2" fill="#fff2a0"/><rect x="12" y="-2.4" width="2.6" height="4.8" rx="1.2" fill="#f6884c" stroke="#e2760c" stroke-width="0.6"/></g></svg><svg class="a" style="left:1851.5px;top:632.9599999999999px" width="18" height="18" viewBox="0 0 18 18"><defs><linearGradient id="rg1860641" x1="0" y1="0" x2="0" y2="1"><stop offset="0" stop-color="#d93a22"/><stop offset="0.45" stop-color="#ea4a2c"/><stop offset="1" stop-color="#fa7a62"/></linearGradient></defs><circle cx="9" cy="9" r="7.05" fill="url(#rg1860641)" stroke="#b8301f" stroke-width="1"/><circle cx="9" cy="9" r="6.0" fill="none" stroke="#f9a090" stroke-width="0.5" opacity="0.6"/><rect x="4.5" y="7.5" width="9" height="3" fill="#fff"/></svg><svg class="a" style="left:1830.25px;top:665.6px" width="18" height="20" viewBox="0 0 18 20"><rect x="1.5" y="3.5" width="13.2" height="15.2" rx="1" fill="#f7f7f7" stroke="#c4c4c4" stroke-width="1"/><g transform="translate(3.6,15.2) rotate(-42)"><path d="M0 0 L3.4 -2.3 L3.4 2.3 Z" fill="#f6c890"/><path d="M0 0 L1.6 -1.1 L1.6 1.1 Z" fill="#6a3000"/><rect x="3.4" y="-2.3" width="9.2" height="4.6" fill="#f8c020" stroke="#e2760c" stroke-width="0.9"/><rect x="3.2" y="-0.9" width="9.2" height="1.2" fill="#fff2a0"/><rect x="12" y="-2.4" width="2.6" height="4.8" rx="1.2" fill="#f6884c" stroke="#e2760c" stroke-width="0.6"/></g></svg><svg class="a" style="left:1851.5px;top:667.1px" width="18" height="18" viewBox="0 0 18 18"><defs><linearGradient id="rg1860676" x1="0" y1="0" x2="0" y2="1"><stop offset="0" stop-color="#d93a22"/><stop offset="0.45" stop-color="#ea4a2c"/><stop offset="1" stop-color="#fa7a62"/></linearGradient></defs><circle cx="9" cy="9" r="7.05" fill="url(#rg1860676)" stroke="#b8301f" stroke-width="1"/><circle cx="9" cy="9" r="6.0" fill="none" stroke="#f9a090" stroke-width="0.5" opacity="0.6"/><rect x="4.5" y="7.5" width="9" height="3" fill="#fff"/></svg><svg class="a" style="left:1825.5px;top:806.9px" width="18" height="18" viewBox="0 0 18 18"><defs><radialGradient id="mg814" cx="0.6" cy="0.65" r="0.65"><stop offset="0" stop-color="#b8f4fc"/><stop offset="0.6" stop-color="#84d0f8"/><stop offset="1" stop-color="#4ea4ee"/></radialGradient></defs><path d="M12.2 12.2 L14.8 14.6" stroke="#f39a12" stroke-width="3" stroke-linecap="round"/><circle cx="8" cy="8" r="5.5" fill="url(#mg814)" stroke="#dc9a3a" stroke-width="1.8"/><circle cx="8" cy="8" r="4.5" fill="none" stroke="#ffe48a" stroke-width="0.7"/><ellipse cx="6.6" cy="6.2" rx="1.8" ry="1.1" fill="#fff" opacity="0.55" transform="rotate(-35 6.6 6.2)"/></svg><svg class="a" style="left:1848.5px;top:806.1px" width="18" height="18" viewBox="0 0 18 18"><defs><linearGradient id="rg1857815" x1="0" y1="0" x2="0" y2="1"><stop offset="0" stop-color="#d93a22"/><stop offset="0.45" stop-color="#ea4a2c"/><stop offset="1" stop-color="#fa7a62"/></linearGradient></defs><circle cx="9" cy="9" r="7.05" fill="url(#rg1857815)" stroke="#b8301f" stroke-width="1"/><circle cx="9" cy="9" r="6.0" fill="none" stroke="#f9a090" stroke-width="0.5" opacity="0.6"/><rect x="4.5" y="7.5" width="9" height="3" fill="#fff"/></svg><svg class="a" style="left:1825.5px;top:843.9px" width="18" height="18" viewBox="0 0 18 18"><defs><radialGradient id="mg851" cx="0.6" cy="0.65" r="0.65"><stop offset="0" stop-color="#b8f4fc"/><stop offset="0.6" stop-color="#84d0f8"/><stop offset="1" stop-color="#4ea4ee"/></radialGradient></defs><path d="M12.2 12.2 L14.8 14.6" stroke="#f39a12" stroke-width="3" stroke-linecap="round"/><circle cx="8" cy="8" r="5.5" fill="url(#mg851)" stroke="#dc9a3a" stroke-width="1.8"/><circle cx="8" cy="8" r="4.5" fill="none" stroke="#ffe48a" stroke-width="0.7"/><ellipse cx="6.6" cy="6.2" rx="1.8" ry="1.1" fill="#fff" opacity="0.55" transform="rotate(-35 6.6 6.2)"/></svg><svg class="a" style="left:1848.5px;top:843.1px" width="18" height="18" viewBox="0 0 18 18"><defs><linearGradient id="rg1857852" x1="0" y1="0" x2="0" y2="1"><stop offset="0" stop-color="#d93a22"/><stop offset="0.45" stop-color="#ea4a2c"/><stop offset="1" stop-color="#fa7a62"/></linearGradient></defs><circle cx="9" cy="9" r="7.05" fill="url(#rg1857852)" stroke="#b8301f" stroke-width="1"/><circle cx="9" cy="9" r="6.0" fill="none" stroke="#f9a090" stroke-width="0.5" opacity="0.6"/><rect x="4.5" y="7.5" width="9" height="3" fill="#fff"/></svg><svg class="a" style="left:1825.5px;top:879.9px" width="18" height="18" viewBox="0 0 18 18"><defs><radialGradient id="mg887" cx="0.6" cy="0.65" r="0.65"><stop offset="0" stop-color="#b8f4fc"/><stop offset="0.6" stop-color="#84d0f8"/><stop offset="1" stop-color="#4ea4ee"/></radialGradient></defs><path d="M12.2 12.2 L14.8 14.6" stroke="#f39a12" stroke-width="3" stroke-linecap="round"/><circle cx="8" cy="8" r="5.5" fill="url(#mg887)" stroke="#dc9a3a" stroke-width="1.8"/><circle cx="8" cy="8" r="4.5" fill="none" stroke="#ffe48a" stroke-width="0.7"/><ellipse cx="6.6" cy="6.2" rx="1.8" ry="1.1" fill="#fff" opacity="0.55" transform="rotate(-35 6.6 6.2)"/></svg><svg class="a" style="left:1848.5px;top:879.1px" width="18" height="18" viewBox="0 0 18 18"><defs><linearGradient id="rg1857888" x1="0" y1="0" x2="0" y2="1"><stop offset="0" stop-color="#d93a22"/><stop offset="0.45" stop-color="#ea4a2c"/><stop offset="1" stop-color="#fa7a62"/></linearGradient></defs><circle cx="9" cy="9" r="7.05" fill="url(#rg1857888)" stroke="#b8301f" stroke-width="1"/><circle cx="9" cy="9" r="6.0" fill="none" stroke="#f9a090" stroke-width="0.5" opacity="0.6"/><rect x="4.5" y="7.5" width="9" height="3" fill="#fff"/></svg><div class="a" style="left:1552px;top:808px;width:3px;height:14px;overflow:hidden;font-size:13px;line-height:15px;color:#333">E</div><div class="a" style="left:1552px;top:845px;width:3px;height:14px;overflow:hidden;font-size:13px;line-height:15px;color:#333">E</div><div class="a" style="left:440px;top:332px;width:4px;height:16px;overflow:hidden;font-size:14px;line-height:16px;color:#333"><span style="margin-left:-3px">s</span></div><div class="a" style="left:1600px;top:0;width:300px;height:2px;overflow:hidden"><i style="position:absolute;left:64px;top:0;width:2px;height:1px;background:#ddd"></i><i style="position:absolute;left:196px;top:0;width:2px;height:1px;background:#ddd"></i><i style="position:absolute;left:258px;top:0;width:2px;height:1px;background:#ddd"></i></div><div class="a" style="left:0;top:898px;width:1904px;height:4px;background:linear-gradient(90deg,#1f1d1a 0%,#1f1d1a 46%,#2a1d12 50%,#1f1d1a 55%,#1f1d1a 100%)"></div></body></html>
